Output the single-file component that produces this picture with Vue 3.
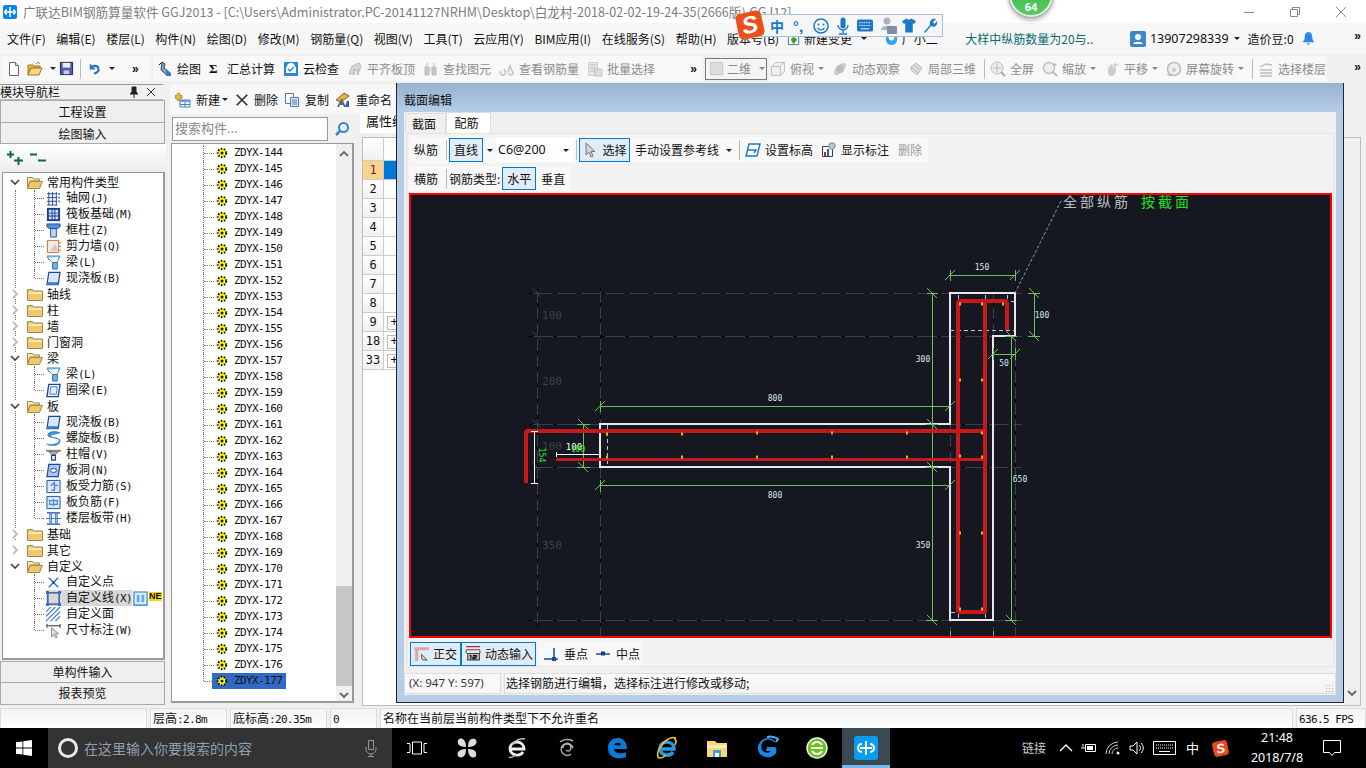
<script setup>
// 图标都写成内联 SVG 片段，viewBox 统一 16x16
const icons = {
  doc: '<path d="M3.5 1.5h6l3 3v10h-9z" fill="#fff" stroke="#667"/><path d="M9.5 1.5v3h3" fill="#dde" stroke="#667"/>',
  open: '<path d="M1 4h5l1 1h6v2H4l-3 7z" fill="#e8b850" stroke="#a07820"/><path d="M4 7h11l-3 7H1z" fill="#f8d880" stroke="#a07820"/><path d="M9 3c1-2 3-2 4 0" fill="none" stroke="#4070c0"/>',
  save: '<path d="M1.5 1.5h13v13h-13z" fill="#4a60b8" stroke="#223"/><path d="M4 2h8v5H4z" fill="#eef"/><path d="M5 10h6v4H5z" fill="#c8c8d8"/>',
  undo: '<path d="M3 3v5h5" fill="none" stroke="#2a6fc0" stroke-width="2"/><path d="M3 8c2-4 8-4 9 0 1 3-2 5-5 6" fill="none" stroke="#2a6fc0" stroke-width="2.4"/>',
  draw: '<path d="M5 1l3 2-1 4 6 5-2 3-7-6z" fill="#7aa8d8" stroke="#345"/><path d="M9 8l5 4v3H9z" fill="#3a78c0"/><path d="M2 4l3-3" stroke="#222"/>',
  cloud: '<path d="M1 1h14v14H1z" fill="#2a88d8"/><path d="M4 6a4 4 0 0 1 8 0h1v6H3V6z" fill="#fff"/><path d="M5 8l2 2 4-4" fill="none" stroke="#2a88d8" stroke-width="1.5"/>',
  align: '<path d="M2 13l3-8 7-3 2 3-3 8z" fill="#d4d4d4" stroke="#bbb"/><path d="M6 8h6v6H6z" fill="#c4c4c4"/><path d="M8 10h2v4H8z" fill="#eee"/>',
  find: '<path d="M2 6h4v8H2zM9 6h4v8H9z" fill="#c8c8c8" stroke="#bbb"/><path d="M3 2h2v4H3zM10 2h2v4h-2zM6 7h3v3H6z" fill="#d8d8d8"/>',
  rebar: '<path d="M2 10a2.5 2.5 0 1 0 4 0l-1-2M9 11l2-6 3 7a2 2 0 0 1-4 0" fill="none" stroke="#c4c4c4" stroke-width="1.6"/>',
  batch: '<path d="M1.5 1.5h9v13h-9z" fill="#e8e8e8" stroke="#ccc"/><path d="M3 4h6M3 7h6M3 10h6" stroke="#bbb"/><path d="M8 8h7v7H8z" fill="#ddd" stroke="#c4c4c4"/>',
  cube: '<path d="M1.5 5.5h9v9h-9zM1.5 5.5l4-4h9l-4 4M10.5 14.5l4-4v-9" fill="#eee" stroke="#c0c0c0"/>',
  orbit: '<ellipse cx="8" cy="8" rx="7" ry="3" transform="rotate(-45 8 8)" fill="#d0d0d0" stroke="#c0c0c0"/><circle cx="8" cy="8" r="4" fill="#bbb"/>',
  part3d: '<path d="M3 6l5-4 6 5-5 7-6-5z" fill="#ddd" stroke="#bbb"/><path d="M6 4l6 5M4 7l6 5" stroke="#bbb"/>',
  full: '<circle cx="7" cy="7" r="6" fill="#eee" stroke="#bbb"/><path d="M7 3v8M3 7h8" stroke="#bbb"/><path d="M11 11l4 4" stroke="#aaa" stroke-width="2"/>',
  zoom: '<circle cx="7" cy="7" r="5.5" fill="#eee" stroke="#c0c0c0" stroke-width="1.5"/><path d="M11 11l4 4" stroke="#bbb" stroke-width="2"/><path d="M13 2v3M11.5 3.5h3" stroke="#bbb"/>',
  pan: '<path d="M4 8c0-3 2-3 2-1V5c0-2 3-2 3 0v2c1-1 3 0 3 2 0 4-2 6-5 6-3 0-3-4-3-7z" fill="#ccc"/><path d="M11 2v5M9 4h5" stroke="#c0c0c0"/>',
  rotate: '<circle cx="8" cy="8" r="6.5" fill="#eee" stroke="#bbb" stroke-width="1.5"/><circle cx="8" cy="9" r="2" fill="#ccc"/><path d="M1 13l4 2" stroke="#aaa"/>',
  floor: '<path d="M2 6l6-3 6 1M2 9h12M2 12h12M2 15h12" fill="none" stroke="#bbb" stroke-width="1.3"/>',
  square: '<path d="M1.5 1.5h13v13h-13z" fill="#ddd" stroke="#c4c4c4"/>',
  level: '<path d="M4 2h11l-3 12H1z" fill="#fff" stroke="#1a78c8" stroke-width="1.4"/><path d="M3 8h8l-2 3" fill="none" stroke="#1a78c8" stroke-width="1.4"/>',
  mark: '<path d="M1.5 4.5h10v10h-10z" fill="#fff" stroke="#345"/><circle cx="11" cy="4" r="3.2" fill="#b8c8e0" stroke="#789"/><path d="M3 10h2v4H3z" fill="#c03020"/><path d="M6 7h2v7H6z" fill="#3060a0"/>',
  arrow: '<path d="M3 1v12l3-3 2 5 2-1-2-4.5h4z" fill="#d4d4d4" stroke="#777"/>',
  ortho: '<path d="M1 2h14v3H1zM2 5h3v10H2z" fill="#d8a8a8"/><path d="M8 9l5 5-3 0-2-2z" fill="#fff" stroke="#666"/>',
  dyn: '<path d="M1.5 1.5h13M1.5 4.5h13" stroke="#a03030"/><path d="M1.5 5v3M14.5 5v3" stroke="#555"/><path d="M3 8h11v6H3z" fill="#bbb" stroke="#444"/><path d="M5 10h1v3M8 10h3v1.500H8V13h3" fill="none" stroke="#000"/>',
  perp: '<path d="M1 13h14" stroke="#1a4aa0" stroke-width="1.5"/><path d="M11 2v12" stroke="#1a4aa0" stroke-width="1.5"/><path d="M9 11h4v4H9z" fill="#1a4aa0"/>',
  mid: '<path d="M1 8h14" stroke="#1a4aa0" stroke-width="1.5"/><path d="M6 5.5h4v4H6z" fill="#123a90"/>',
  grid: '<path d="M1 3h11M1 7h11M1 11h11M1 15h11M3 1v14M7 1v14M11 1v14" stroke="#1a4aa0" fill="none"/><path d="M13 2h2v2h-2zM13 6h2v2h-2zM13 10h2v2h-2z" fill="#4a7ad0"/>',
  raft: '<path d="M1 1h14v14H1z" fill="#1a3a90"/><path d="M3 3h3v3H3zM7 3h2v3H7zM10 3h3v3h-3zM3 7h3v2H3zM7 7h2v2H7zM10 7h3v2h-3zM3 10h3v3H3zM7 10h2v3H7zM10 10h3v3h-3z" fill="#cfe0f8"/>',
  column: '<path d="M1 1h14v3l-3 2H4L1 4z" fill="#5a8ed8" stroke="#1a4aa0"/><path d="M5 6h6v9H5z" fill="#bcd8f8" stroke="#1a4aa0"/>',
  wall: '<path d="M1.5 1.5h12v13h-12z" fill="#f4ece4" stroke="#c86a30"/><path d="M4 13l6-8 3 8z" fill="#bbb" opacity=".7"/><path d="M14 4h2M14 8h2M14 12h2" stroke="#c86a30"/>',
  beam: '<path d="M1 1h14l-2 4H3z" fill="#8ac0f0" stroke="#3a90d0"/><path d="M2 3l5 5h5l2-6" fill="#fff" stroke="#3a90d0"/><path d="M7 8h5v7H7z" fill="#6ab0e8" stroke="#2a70b8"/>',
  slab: '<path d="M3 1.5h12l-2 13H1z" fill="#d8e8fa" stroke="#1a4aa0" stroke-width="1.3"/><path d="M2 12h11v3H1z" fill="#3a78d0"/>',
  ring: '<path d="M3 1.5h12l-2 13H1z" fill="#fff" stroke="#1a4aa0" stroke-width="1.5"/><path d="M5 4h7l-1 8H4z" fill="#e4eefa" stroke="#3a78d0"/>',
  spiral: '<path d="M15 2C9-1 1 1 2 5c1 3 12 1 12 5 0 4-9 5-13 4 3 2 13 3 14-3 1-4-10-3-10-6 0-1 6-2 10-3z" fill="#3a98e0" stroke="#1a68b8" stroke-width=".6"/>',
  cap: '<path d="M0 3h16v2H0z" fill="#888"/><path d="M3 5h10l-3 3H6z" fill="#bbb" stroke="#666"/><path d="M6 9h4v5H6z" fill="#fff" stroke="#1a4aa0" stroke-width="1.3"/>',
  hole: '<path d="M3 1.5h12l-2 13H1z" fill="#a8c8f0" stroke="#1a4aa0" stroke-width="1.3"/><ellipse cx="8" cy="8" rx="3.5" ry="2" fill="#fff" stroke="#1a4aa0"/>',
  main: '<path d="M1 1.5h14v13H1z" fill="#d8e8fa" stroke="#1a4aa0"/><path d="M5 7l4-3v3h4M9 7v5H6" fill="none" stroke="#4a8ad0" stroke-width="1.5"/>',
  neg: '<path d="M1 1.5h14v13H1z" fill="#d8e8fa" stroke="#1a4aa0"/><path d="M8 4v8M3 6h10M3 10h10M4 6v4M12 6v4" fill="none" stroke="#4a8ad0" stroke-width="1.2"/>',
  band: '<path d="M1 2h14M1 14h14" stroke="#1a4aa0" stroke-width="1.5"/><path d="M4 3h2v10H4zM10 3h2v10h-2z" fill="#bcd8f8" stroke="#3a78d0"/><path d="M0 8h16" stroke="#3a78d0"/>',
  point: '<path d="M3 3l10 10M13 3L3 13" stroke="#2a70c8" stroke-width="1.5"/><circle cx="8" cy="8" r="1" fill="#123"/>',
  line: '<path d="M2 2h12v12H2z" fill="none" stroke="#1a4aa0" stroke-width="1.4"/><path d="M0 0h3v3H0zM13 0h3v3h-3zM0 13h3v3H0zM13 13h3v3h-3z" fill="#2a70c8"/>',
  area: '<path d="M0 5l5-5M0 10L10 0M0 15L15 0M5 15L15 5M10 15l5-5" stroke="#3a78d0" stroke-width="1.2"/>',
  dim: '<path d="M1 3h14M1 1v4M15 1v4" stroke="#222"/><path d="M6 5v10l2.500-2.500 2 3.500 1.500-1-2-3.500h3.500z" fill="#ddd" stroke="#888"/>',
  split: '<path d="M1 1h14v14H1z" fill="#dff0ff" stroke="#1a78c8" stroke-width="1.2"/><path d="M4 4h3v8H4zM9 4h3v8H9z" fill="#6aa8e8"/>',
  newAdd: '<path d="M3 2h4v3h3v4H7v3H3V9H0V5h3z" fill="#e8c030" stroke="#a08010" transform="scale(.7)"/><path d="M5 8h10v7H5z" fill="#fff" stroke="#4a7ab8"/><path d="M5 8h10v2H5z" fill="#6a9ad8"/><path d="M10 10v5M5 12.5h10" stroke="#4a7ab8"/>',
  del: '<path d="M2 2l12 12M14 2L2 14" stroke="#333" stroke-width="2"/>',
  copy: '<path d="M1.5 1.5h8v10h-8z" fill="#fff" stroke="#4a7ab8"/><path d="M6.5 5.5h8v9h-8z" fill="#dbe8f8" stroke="#4a7ab8"/><path d="M8 8h5M8 10h5M8 12h5" stroke="#4a7ab8"/>',
  rename: '<path d="M1 8l8-7 5 3-8 6z" fill="#e0b040" stroke="#8a6a20"/><path d="M2 15l4-8 1 0 4 8h-2l-1-2H5l-1 2z" fill="#666"/><path d="M10 15l2-6h2v6z" fill="#2a60b8"/>',
  search: '<circle cx="9.5" cy="6.5" r="4.5" fill="none" stroke="#2a88d8" stroke-width="2"/><path d="M6 10l-4 4" stroke="#2a88d8" stroke-width="2.5"/>',
  change: '<path d="M2.5 1.5h8l3 3v10h-11z" fill="#fff" stroke="#3a70b8"/><path d="M8 6l4 3-4 5-3-5z" fill="#3aa020"/>',
  helper: '<path d="M2 1h12v8a6 6 0 0 1-12 0z" fill="#3aa0e8"/><path d="M5 5v2a3 3 0 0 0 6 0V5" fill="#fff"/>',
  user: '<path d="M0 2a2 2 0 0 1 2-2h12a2 2 0 0 1 2 2v12a2 2 0 0 1-2 2H2a2 2 0 0 1-2-2z" fill="#3a88c8"/><circle cx="8" cy="6" r="3" fill="#fff"/><path d="M3 13c1-3 9-3 10 0z" fill="#fff"/>',
  bell: '<path d="M8 1c-3 0-4 3-4 6 0 3-2 4-2 5h12c0-1-2-2-2-5 0-3-1-6-4-6z" fill="#2a88e8"/><path d="M6 13h4l-2 2z" fill="#2a88e8"/>'
}

const bars = {
  left: [
    { icon: 'draw', label: '绘图' },
    { sigma: true, label: '汇总计算' },
    { icon: 'cloud', label: '云检查' },
    { icon: 'align', label: '平齐板顶', off: true },
    { icon: 'find', label: '查找图元', off: true },
    { icon: 'rebar', label: '查看钢筋量', off: true },
    { icon: 'batch', label: '批量选择', off: true }
  ],
  right: [
    { icon: 'cube', label: '俯视', off: true, caret: true },
    { icon: 'orbit', label: '动态观察', off: true },
    { icon: 'part3d', label: '局部三维', off: true },
    { sep: true },
    { icon: 'full', label: '全屏', off: true },
    { icon: 'zoom', label: '缩放', off: true, caret: true },
    { icon: 'pan', label: '平移', off: true, caret: true },
    { icon: 'rotate', label: '屏幕旋转', off: true, caret: true },
    { sep: true },
    { icon: 'floor', label: '选择楼层', off: true }
  ]
}

const menus = ['文件(F)', '编辑(E)', '楼层(L)', '构件(N)', '绘图(D)', '修改(M)', '钢筋量(Q)', '视图(V)', '工具(T)', '云应用(Y)', 'BIM应用(I)', '在线服务(S)', '帮助(H)', '版本号(B)']

const tree = [
  { label: '常用构件类型', open: true },
  { label: '轴网(J)', icon: 'grid' },
  { label: '筏板基础(M)', icon: 'raft' },
  { label: '框柱(Z)', icon: 'column' },
  { label: '剪力墙(Q)', icon: 'wall' },
  { label: '梁(L)', icon: 'beam' },
  { label: '现浇板(B)', icon: 'slab', last: true },
  { label: '轴线' },
  { label: '柱' },
  { label: '墙' },
  { label: '门窗洞' },
  { label: '梁', open: true },
  { label: '梁(L)', icon: 'beam' },
  { label: '圈梁(E)', icon: 'ring', last: true },
  { label: '板', open: true },
  { label: '现浇板(B)', icon: 'slab' },
  { label: '螺旋板(B)', icon: 'spiral' },
  { label: '柱帽(V)', icon: 'cap' },
  { label: '板洞(N)', icon: 'hole' },
  { label: '板受力筋(S)', icon: 'main' },
  { label: '板负筋(F)', icon: 'neg' },
  { label: '楼层板带(H)', icon: 'band', last: true },
  { label: '基础' },
  { label: '其它' },
  { label: '自定义', open: true },
  { label: '自定义点', icon: 'point' },
  { label: '自定义线(X)', icon: 'line', active: true },
  { label: '自定义面', icon: 'area' },
  { label: '尺寸标注(W)', icon: 'dim', last: true }
]

// 拆开中文和括号里的快捷键，快捷键用等宽字
const splitKey = (s) => {
  const i = s.indexOf('(')
  return i < 0 ? [s, ''] : [s.slice(0, i), s.slice(i)]
}

const components = []
for (let n = 144; n <= 177; n++) components.push('ZDYX-' + n)

const gridRows = ['1', '2', '3', '4', '5', '6', '7', '8', '9', '18', '33']

// 画布上的点和线，坐标直接用页面坐标
const axisH = [
  [529, 1022, 293], [529, 1022, 336], [529, 1022, 424], [529, 1022, 467], [529, 1022, 620]
]
const axisV = [
  [537, 287, 626], [600, 287, 636], [950, 287, 636], [993, 287, 636], [1015, 287, 636]
]
const greyTicks = [[537, 293], [537, 336], [537, 424], [537, 467]]
const ticksH = [[600, 406], [950, 406], [600, 485], [950, 485], [950, 275], [1015, 275], [993, 354], [1015, 354]]
const ticksV = [[1034, 293], [1034, 336], [932, 293], [932, 424], [932, 467], [932, 620], [1011, 336], [1011, 620], [583, 424], [583, 467]]
const yellow = [
  [607, 434], [682, 434], [757, 433], [832, 433], [907, 433], [982, 433],
  [607, 457], [682, 457], [757, 457], [832, 457], [907, 457], [960, 456], [982, 457],
  [960, 304], [982, 304], [1003, 304], [960, 380], [982, 380],
  [960, 533], [982, 533], [960, 609], [982, 609]
]
const dimLabels = [
  ['800', 775, 401], ['800', 775, 498], ['150', 982, 270], ['100', 1042, 318],
  ['300', 923, 362], ['350', 923, 548], ['50', 1004, 366], ['650', 1020, 482]
]
const bgLabels = [['100', 552, 319], ['200', 552, 385], ['100', 552, 450], ['350', 552, 549]]
</script>

<template>
  <div class="app">
    <header class="titlebar">
      <span class="logo">
        <svg viewBox="0 0 16 16" width="16" height="16"><path d="M1 3a2 2 0 0 1 2-2h10a2 2 0 0 1 2 2v10a2 2 0 0 1-2 2H3a2 2 0 0 1-2-2z" fill="#0a84e8"/><path d="M8 3v10M4 8h8M5 6a2 2 0 0 0 0 4M11 6a2 2 0 0 1 0 4" fill="none" stroke="#fff" stroke-width="1.5"/></svg>
      </span>
      <span class="title-text">广联达BIM钢筋算量软件 GGJ2013 - [C:\Users\Administrator.PC-20141127NRHM\Desktop\白龙村-2018-02-02-19-24-35(2666版).GGJ12]</span>
      <span class="win-ctl">
        <svg width="12" height="12" viewBox="0 0 12 12"><path d="M1 6.5h10" stroke="#888"/></svg>
        <svg width="12" height="12" viewBox="0 0 12 12"><path d="M1.5 3.5h7v7h-7zM3.5 3V1.5h7v7H9" fill="none" stroke="#888"/></svg>
        <svg width="12" height="12" viewBox="0 0 12 12"><path d="M1 1l10 10M11 1L1 11" stroke="#888"/></svg>
      </span>
    </header>

    <nav class="menubar">
      <span v-for="m in menus" :key="m">{{ m }}</span>
      <span class="menu-link"><svg viewBox="0 0 16 16" width="15" height="15" v-html="icons.change"></svg>新建变更<i class="caret"></i></span>
      <span class="menu-link"><svg viewBox="0 0 16 16" width="15" height="15" v-html="icons.helper"></svg>广小二</span>
      <span class="notice">大样中纵筋数量为20与..</span>
      <span class="account">
        <svg viewBox="0 0 16 16" width="16" height="16" v-html="icons.user"></svg>
        <span class="phone">13907298339</span><i class="caret"></i>
        <span class="beans">造价豆:0</span>
        <svg viewBox="0 0 16 16" width="15" height="17" v-html="icons.bell"></svg>
      </span>
      <b class="more menu-more">»</b>
    </nav>

    <div class="toolbar">
      <div class="tb-group tb-file">
        <svg viewBox="0 0 16 16" width="16" height="16" v-html="icons.doc"></svg>
        <svg viewBox="0 0 16 16" width="16" height="16" v-html="icons.open"></svg>
        <i class="caret"></i>
        <svg viewBox="0 0 16 16" width="15" height="15" v-html="icons.save"></svg>
        <span class="tb-sep"></span>
        <svg viewBox="0 0 16 16" width="14" height="15" v-html="icons.undo"></svg>
        <i class="caret"></i>
        <b class="more">»</b>
      </div>
      <div class="tb-group tb-left">
        <span v-for="b in bars.left" :key="b.label" class="tb-item" :class="{ off: b.off }">
          <b v-if="b.sigma" class="sigma">Σ</b>
          <svg v-else viewBox="0 0 16 16" width="16" height="16" v-html="icons[b.icon]"></svg>
          {{ b.label }}
        </span>
        <b class="more tb-left-more">»</b>
      </div>
      <div class="combo2d">
        <svg viewBox="0 0 16 16" width="15" height="15" v-html="icons.square"></svg>
        <span>二维</span><i class="caret grey"></i>
      </div>
      <div class="tb-group tb-right">
        <template v-for="(b, i) in bars.right" :key="i">
          <span v-if="b.sep" class="tb-sep"></span>
          <span v-else class="tb-item off">
            <svg viewBox="0 0 16 16" width="16" height="16" v-html="icons[b.icon]"></svg>
            {{ b.label }}<i v-if="b.caret" class="caret grey"></i>
          </span>
        </template>
      </div>
      <b class="more tb-end">»</b>
    </div>

    <main class="workspace">
      <aside class="nav">
        <div class="nav-head">
          <span>模块导航栏</span>
          <svg width="10" height="12" viewBox="0 0 10 12"><path d="M3 1h4v5l2 2H1l2-2zM5 8v4" fill="#222" stroke="#222"/></svg>
          <svg width="10" height="10" viewBox="0 0 10 10"><path d="M1 1l8 8M9 1L1 9" stroke="#333"/></svg>
        </div>
        <div class="nav-btn">工程设置</div>
        <div class="nav-btn">绘图输入</div>
        <div class="tree-tools">
          <svg width="16" height="16" viewBox="0 0 16 16"><path d="M0 4.5h7M3.500 1v7M7 10.500h9M11.500 7v8" stroke="#0a6a50" stroke-width="2"/></svg>
          <svg width="16" height="16" viewBox="0 0 16 16"><path d="M0 4.5h7M8 10.500h8" stroke="#0a6a50" stroke-width="2"/></svg>
        </div>
        <div class="tree">
          <span class="trunk"></span>
          <div v-for="(n, i) in tree" :key="i" class="tree-row" :class="{ child: n.icon, last: n.last }">
            <template v-if="n.icon">
              <span class="child-body" :class="{ active: n.active }">
                <svg viewBox="0 0 16 16" width="15" height="15" v-html="icons[n.icon]"></svg>
                <span class="label">{{ splitKey(n.label)[0] }}<span class="mono">{{ splitKey(n.label)[1] }}</span></span>
              </span>
              <template v-if="n.active">
                <svg class="split" viewBox="0 0 16 16" width="15" height="15" v-html="icons.split"></svg>
                <span class="new-tag">NE</span>
              </template>
            </template>
            <template v-else>
              <svg class="chev" width="10" height="10" viewBox="0 0 10 10">
                <path v-if="n.open" d="M1 3l4 4 4-4" fill="none" stroke="#444" stroke-width="1.6"/>
                <path v-else d="M3 1l4 4-4 4" fill="none" stroke="#bbb" stroke-width="1.8"/>
              </svg>
              <svg class="folder" width="16" height="13" viewBox="0 0 16 13">
                <template v-if="n.open">
                  <path d="M0.5 1.5h5l1 1.500h6v2H3l-2.500 7z" fill="#f8e8b0" stroke="#a08850"/>
                  <path d="M3 5.5h12.500l-3 7H0.500z" fill="#f0c868" stroke="#a08850"/>
                </template>
                <template v-else>
                  <path d="M0.5 1.5h5l1 1.500h9v9.500H0.500z" fill="#f0c868" stroke="#a08850"/>
                  <path d="M1.5 4h13v2h-13z" fill="#fcecc0"/>
                </template>
              </svg>
              <span class="label">{{ n.label }}</span>
            </template>
          </div>
        </div>
        <div class="nav-btn low">单构件输入</div>
        <div class="nav-btn">报表预览</div>
      </aside>

      <section class="parts">
        <div class="parts-bar">
          <span class="tool"><svg viewBox="0 0 16 16" width="16" height="16" v-html="icons.newAdd"></svg>新建<i class="caret"></i></span>
          <span class="tool"><svg viewBox="0 0 16 16" width="14" height="14" v-html="icons.del"></svg>删除</span>
          <span class="tool"><svg viewBox="0 0 16 16" width="16" height="16" v-html="icons.copy"></svg>复制</span>
          <span class="tool"><svg viewBox="0 0 16 16" width="16" height="16" v-html="icons.rename"></svg>重命名</span>
        </div>
        <div class="search">
          <span class="search-input">搜索构件...</span>
          <svg viewBox="0 0 16 16" width="16" height="16" v-html="icons.search"></svg>
        </div>
        <div class="parts-list">
          <div class="rows">
            <div v-for="c in components" :key="c" class="part-row" :class="{ sel: c === 'ZDYX-177' }">
              <span class="part-name">
                <svg width="12" height="12" viewBox="0 0 12 12"><circle cx="6" cy="6" r="4.2" fill="#ff0" stroke="#111" stroke-width="2" stroke-dasharray="1.6 1.4"/><circle cx="6" cy="6" r="1.5" fill="#111"/></svg>
                <span class="mono name">{{ c }}</span>
              </span>
            </div>
          </div>
          <div class="vscroll">
            <svg class="up" width="10" height="7" viewBox="0 0 10 7"><path d="M1 6l4-4 4 4" fill="none" stroke="#666" stroke-width="1.8"/></svg>
            <span class="thumb"></span>
            <svg width="10" height="7" viewBox="0 0 10 7"><path d="M1 1l4 4 4-4" fill="none" stroke="#666" stroke-width="1.8"/></svg>
          </div>
        </div>
      </section>

      <section class="props">
        <div class="props-tab">属性编辑</div>
        <div class="props-box">
          <div class="props-grid">
            <div class="grid-row head"><span class="no"></span><span class="val"></span></div>
            <div v-for="r in gridRows" :key="r" class="grid-row" :class="{ current: r === '1' }">
              <span class="no">{{ r }}</span>
              <span class="val"><i v-if="Number(r) >= 9" class="plus">+</i></span>
            </div>
          </div>
          <div class="vscroll right">
            <svg width="10" height="7" viewBox="0 0 10 7"><path d="M1 1l4 4 4-4" fill="none" stroke="#666" stroke-width="1.8"/></svg>
          </div>
        </div>
      </section>

      <!-- 浮在主界面上的截面编辑窗口 -->
      <div class="dialog">
        <div class="dlg-title">截面编辑</div>
        <div class="dlg-body">
          <div class="tabs">
            <span class="tab">截面</span>
            <span class="tab on">配筋</span>
          </div>
          <div class="panel">
            <div class="rebar-bar row1">
              <span>纵筋</span><span class="tb-sep"></span>
              <span class="btn on line-btn">直线</span><i class="caret"></i>
              <span class="combo"><span>C6@200</span><i class="caret"></i></span>
              <span class="tb-sep"></span>
              <span class="btn on pick"><svg viewBox="0 0 16 16" width="16" height="16" v-html="icons.arrow"></svg>选择</span>
              <span class="ref">手动设置参考线<i class="caret"></i></span>
              <span class="tb-sep"></span>
              <span class="ic"><svg viewBox="0 0 16 16" width="16" height="16" v-html="icons.level"></svg>设置标高</span>
              <span class="ic"><svg viewBox="0 0 16 16" width="16" height="16" v-html="icons.mark"></svg>显示标注</span>
              <span class="ic grey">删除</span>
            </div>
            <div class="rebar-bar row2">
              <span>横筋</span><span class="tb-sep"></span>
              <span class="type">钢筋类型:</span>
              <span class="btn on">水平</span>
              <span class="vert">垂直</span>
            </div>
            <div class="canvas">
              <svg width="919" height="441" viewBox="411 195 919 441">
                <g shape-rendering="crispEdges">
                  <g v-for="(l, i) in axisH" :key="'h' + i">
                    <line :x1="l[0]" :x2="l[1]" :y1="l[2] + 0.5" :y2="l[2] + 0.5" stroke="#3a3f4a"/>
                    <line :x1="l[0]" :x2="l[1]" :y1="l[2] + 0.5" :y2="l[2] + 0.5" stroke="#000" stroke-dasharray="4 20"/>
                  </g>
                  <g v-for="(l, i) in axisV" :key="'v' + i">
                    <line :x1="l[0] + 0.5" :x2="l[0] + 0.5" :y1="l[1]" :y2="l[2]" stroke="#3a3f4a"/>
                    <line :x1="l[0] + 0.5" :x2="l[0] + 0.5" :y1="l[1]" :y2="l[2]" stroke="#000" stroke-dasharray="4 12"/>
                  </g>
                </g>
                <line v-for="(t, i) in greyTicks" :key="'g' + i" :x1="t[0] - 5" :y1="t[1] - 5" :x2="t[0] + 4" :y2="t[1] + 4" stroke="#3a3f4a"/>
                <text v-for="(t, i) in bgLabels" :key="'b' + i" class="bg-num" :x="t[1]" :y="t[2]" text-anchor="middle">{{ t[0] }}</text>

                <!-- 截面外框 -->
                <path d="M600 424H950V293H1015V336H993V620H950V467H600Z" fill="none" stroke="#e8e8e8" stroke-width="2"/>

                <!-- 标注线 -->
                <g stroke="#6fbf5f" fill="none" shape-rendering="crispEdges">
                  <path d="M600.5 406.5H950M600.5 485.5H950M950.5 275.5H1015M993.5 354.5H1015M1034.5 293V336M932.5 293V620M1011.5 336V620M583.5 424V467"/>
                  <path d="M600.5 401V412M600.5 480V492M950.5 270V281M1015.5 270V281M993.5 348V360M1015.5 348V360M950.5 631V636M993.5 631V636"/>
                  <path d="M927 293.5H938M1028 293.5H1040M1028 336.5H1040M926 424.5H938M926 467.5H938M926 620.5H938M1005 336.5H1017M1005 620.5H1017M577 424.5H590M577 467.5H590"/>
                </g>
                <g stroke="#6fbf5f">
                  <line v-for="(t, i) in ticksH" :key="'th' + i" :x1="t[0] - 5" :y1="t[1] + 5" :x2="t[0] + 5" :y2="t[1] - 5"/>
                  <line v-for="(t, i) in ticksV" :key="'tv' + i" :x1="t[0] - 5" :y1="t[1] - 5" :x2="t[0] + 5" :y2="t[1] + 5"/>
                </g>

                <!-- 内侧蓝色虚线 -->
                <g stroke="#a8c8f0" stroke-dasharray="4 3" shape-rendering="crispEdges">
                  <line x1="950" x2="1015" y1="330.5" y2="330.5"/>
                  <line x1="1004" x2="1014" y1="301.5" y2="301.5"/>
                  <line x1="607.5" x2="607.5" y1="425" y2="467"/>
                  <line x1="958.5" x2="958.5" y1="295" y2="300"/>
                  <line x1="985.5" x2="985.5" y1="295" y2="300"/>
                  <line x1="1007.5" x2="1007.5" y1="295" y2="300"/>
                  <line x1="951" x2="956" y1="612.5" y2="612.5"/>
                  <line x1="958.5" x2="958.5" y1="614" y2="619"/>
                  <line x1="985.5" x2="985.5" y1="614" y2="619"/>
                </g>

                <!-- 钢筋 -->
                <g fill="none" stroke="#c8181c" stroke-linejoin="round">
                  <path d="M526 483V433Q526 431 528 431H985" stroke-width="4"/>
                  <path d="M556 459.5H985" stroke-width="3"/>
                  <path d="M958 612V304Q958 301 961 301H1004Q1007 301 1007 304V330" stroke-width="4"/>
                  <path d="M985 301V612H958" stroke-width="4"/>
                </g>
                <rect v-for="(d, i) in yellow" :key="'y' + i" :x="d[0] - 1" :y="d[1] - 1.5" width="2" height="3" fill="#f0b000"/>

                <!-- 左端白色标注 -->
                <g stroke="#fff" fill="none" shape-rendering="crispEdges">
                  <path d="M534.5 431V484M531 431.5H538M531 483.5H538M556 454.5H600M556.5 452V457"/>
                </g>
                <text class="num big-num" x="574" y="450" text-anchor="middle">100</text>
                <text class="num green-num" x="578" y="452" text-anchor="middle">100</text>
                <text class="num green-num" transform="translate(539 455) rotate(90)" text-anchor="middle">154</text>

                <text v-for="(t, i) in dimLabels" :key="'d' + i" class="num" :x="t[1]" :y="t[2]" text-anchor="middle">{{ t[0] }}</text>

                <line x1="1015" y1="293" x2="1062" y2="199" stroke="#999" stroke-dasharray="3 2"/>
                <text class="leader" x="1063" y="207">全部纵筋</text>
                <text class="leader green" x="1141" y="207">按截面</text>
              </svg>
            </div>
            <div class="snap-bar">
              <span class="btn on snap"><svg viewBox="0 0 16 16" width="17" height="17" v-html="icons.ortho"></svg>正交</span>
              <span class="btn on snap"><svg viewBox="0 0 16 16" width="18" height="17" v-html="icons.dyn"></svg>动态输入</span>
              <span class="snap-group">
                <span class="ic"><svg viewBox="0 0 16 16" width="16" height="16" v-html="icons.perp"></svg>垂点</span>
                <span class="ic"><svg viewBox="0 0 16 16" width="16" height="16" v-html="icons.mid"></svg>中点</span>
              </span>
            </div>
          </div>
          <div class="dlg-status">
            <span class="coord">(X: 947 Y: 597)</span>
            <span class="hint">选择钢筋进行编辑，选择标注进行修改或移动;<i class="grip"></i></span>
          </div>
        </div>
      </div>
    </main>

    <footer class="statusbar">
      <span class="cell c0"></span>
      <span class="cell c1">层高<span class="mono">:2.8m</span></span>
      <span class="cell c2">底标高<span class="mono">:20.35m</span></span>
      <span class="cell c3"><span class="mono">0</span></span>
      <span class="cell c4">名称在当前层当前构件类型下不允许重名</span>
      <span class="cell c5"><span class="mono">636.5 FPS</span></span>
    </footer>

    <div class="taskbar">
      <span class="start">
        <svg width="16" height="16" viewBox="0 0 16 16"><path d="M0 2.3l6.5-.9v6.200H0zM7.3 1.300L16 0v7.600H7.300zM0 8.400h6.500v6.200L0 13.700zM7.300 8.400H16V16l-8.700-1.200z" fill="#fff"/></svg>
      </span>
      <span class="task-search">
        <svg width="22" height="22" viewBox="0 0 22 22"><circle cx="11" cy="11" r="8.5" fill="none" stroke="#e8e8e8" stroke-width="3"/></svg>
        <span class="task-hint">在这里输入你要搜索的内容</span>
        <svg class="mic" width="12" height="18" viewBox="0 0 12 18"><path d="M3.5 1.5h5v9h-5zM1 8v2a5 5 0 0 0 10 0V8M6 15v2M3 17.500h6" fill="none" stroke="#999"/></svg>
      </span>
      <span class="task-icons">
        <span class="task-ic"><svg width="20" height="14" viewBox="0 0 20 14"><path d="M5.5 1h9v12h-9zM0 2.500h3v9H0M20 2.500h-3v9h3" fill="none" stroke="#fff"/></svg></span>
        <span class="task-ic"><svg width="22" height="22" viewBox="0 0 22 22"><g fill="#ddd"><path d="M10 10C3 10 1 7 2 3c2-3 8-2 8 7z"/><path d="M12 10c0-7 3-9 7-8 3 2 2 8-7 8z"/><path d="M12 12c7 0 9 3 8 7-2 3-8 2-8-7z"/><path d="M10 12c0 7-3 9-7 8-3-2-2-8 7-8z"/></g></svg></span>
        <span class="task-ic"><svg width="22" height="22" viewBox="0 0 22 22"><path d="M4 12h14c0-9-13-9-14-1 0 8 10 9 13 4" fill="none" stroke="#eee" stroke-width="2.8"/><path d="M19 2c-4-1-10 1-13 6M3 20c1 1 4 0 7-2" fill="none" stroke="#bbb" stroke-width="1.5"/></svg></span>
        <span class="task-ic"><svg width="20" height="20" viewBox="0 0 20 20"><path d="M16 10a6 6 0 1 0-2 6M6 10a4 4 0 0 1 8 0c0 3-3 4-5 2M3 4c3-3 9-3 13-1" fill="none" stroke="#aaa" stroke-width="1.5"/></svg></span>
        <span class="task-ic"><svg width="22" height="22" viewBox="0 0 22 22"><path d="M2 11C2 4 7 1 12 1c5 0 9 4 9 11H8c0 4 6 6 12 3v5c-8 3-18 1-18-9zm6-3c0 0 7 1 7 0 0-3-6-3-7 0z" fill="#0a7ad8"/></svg></span>
        <span class="task-ic"><svg width="24" height="24" viewBox="0 0 24 24"><path d="M5 13h14c0-9-13-9-14-1 0 8 10 9 13 4" fill="none" stroke="#2a98e0" stroke-width="3.5"/><path d="M21 2c-5-2-13 3-17 11-2 5-2 9 1 9 2 0 4-1 6-3M19 3c2 0 3 2 1 6" fill="none" stroke="#e8c030" stroke-width="1.6"/></svg></span>
        <span class="task-ic"><svg width="22" height="20" viewBox="0 0 22 20"><path d="M1 3h8l2 2h10v14H1z" fill="#f8d870"/><path d="M1 7h20v3H1z" fill="#fcecb0"/><path d="M7 12h8v7H7z" fill="#3aa0e0"/><path d="M9 15h4v4H9z" fill="#fff"/></svg></span>
        <span class="task-ic"><svg width="26" height="26" viewBox="0 0 26 26"><path d="M22 8C19 3 14 2 10 4 4 7 2 14 6 19c5 5 13 4 16-1 1-3 0-5-1-6h-8l-1 4h5c-2 3-7 2-9-1-2-4 0-9 4-10 3-1 6 0 8 2z" fill="#1a88e8"/><path d="M13 2c4-1 8 0 11 2l-2 3" fill="none" stroke="#4ab0f8" stroke-width="2"/></svg></span>
        <span class="task-ic"><svg width="24" height="24" viewBox="0 0 24 24"><circle cx="12" cy="12" r="10" fill="#6ac020" stroke="#e8f8d0" stroke-width="1.5"/><path d="M6 12h12M7 9c2-4 8-4 10 0M7 15c2 4 8 4 10 0" fill="none" stroke="#fff" stroke-width="2"/></svg></span>
        <span class="task-ic active"><svg width="24" height="24" viewBox="0 0 24 24"><rect width="24" height="24" rx="3" fill="#0a9cf0"/><path d="M12 5v14M6 12h12M8 8a4 4 0 0 0 0 8M16 8a4 4 0 0 1 0 8" fill="none" stroke="#fff" stroke-width="2"/></svg></span>
      </span>
      <span class="tray">
        <span class="tray-text">链接</span>
        <svg width="14" height="8" viewBox="0 0 14 8"><path d="M1 7l6-6 6 6" fill="none" stroke="#fff" stroke-width="1.3"/></svg>
        <svg width="16" height="12" viewBox="0 0 16 12"><path d="M4.5 2.5h10v7h-10z" fill="none" stroke="#fff"/><path d="M6 4h6v4H6z" fill="#fff"/><path d="M0 6h4M2 2v3" stroke="#fff"/></svg>
        <svg width="16" height="14" viewBox="0 0 16 14"><path d="M1 13A12 12 0 0 1 13 1M4 13a9 9 0 0 1 9-9M7 13a6 6 0 0 1 6-6" fill="none" stroke="#ccc"/><circle cx="13" cy="12" r="1.5" fill="#fff"/></svg>
        <svg width="16" height="14" viewBox="0 0 16 14"><path d="M1 5h3l4-4v12l-4-4H1zM10 4c2 2 2 4 0 6M12 2c3 3 3 7 0 10" fill="none" stroke="#fff"/></svg>
        <svg width="23" height="14" viewBox="0 0 23 14"><path d="M.5.500h22v13H.5z" fill="none" stroke="#fff"/><path d="M3 4h17M3 7h17" stroke="#fff" stroke-dasharray="1 1"/><path d="M6 10.500h11" stroke="#fff"/></svg>
        <span class="tray-cn">中</span>
        <span class="sg-mini">S</span>
        <span class="clock"><span>21:48</span><span>2018/7/8</span></span>
        <svg class="bubble" width="18" height="18" viewBox="0 0 18 18"><path d="M.5 1.500h17v12h-6l-2.500 3-2.500-3h-6z" fill="none" stroke="#fff"/></svg>
      </span>
    </div>

    <!-- 输入法工具条和悬浮球，盖在窗口上面 -->
    <div class="orb">64</div>
    <div class="ime">
      <span class="ime-s">S</span>
      <span class="ime-bar">
        <b>中</b>
        <b class="punc">°,</b>
        <svg class="ime-smile" width="16" height="16" viewBox="0 0 16 16"><circle cx="8" cy="8" r="7" fill="none" stroke="#1a78c8" stroke-width="1.5"/><circle cx="5.5" cy="6.5" r="1" fill="#1a78c8"/><circle cx="10.5" cy="6.5" r="1" fill="#1a78c8"/><path d="M4.5 10c2 2.500 5 2.500 7 0" fill="none" stroke="#1a78c8" stroke-width="1.3"/></svg>
        <svg width="12" height="18" viewBox="0 0 12 18"><path d="M3.5 3a2.500 2.500 0 0 1 5 0v6a2.500 2.500 0 0 1-5 0z" fill="#1a78c8"/><path d="M1 8a5 5 0 0 0 10 0M6 13v3M2 17h8" fill="none" stroke="#1a78c8" stroke-width="1.3"/></svg>
        <svg width="16" height="13" viewBox="0 0 17 13"><rect width="17" height="13" rx="2" fill="#1a78c8"/><path d="M2 3.500h13M2 6.500h13" stroke="#fff" stroke-dasharray="1.500 1"/><path d="M4 10h9" stroke="#fff"/></svg>
        <svg width="16" height="17" viewBox="0 0 16 17"><circle cx="6" cy="4" r="3.5" fill="#aab4c0"/><path d="M0 13c0-5 9-5 10-3v3z" fill="#aab4c0"/><rect x="6" y="9" width="10" height="8" rx="1" fill="#8090a0"/></svg>
        <svg class="ime-shirt" width="14" height="15" viewBox="0 0 15 15"><path d="M0 3l5-3 2.500 1.500L10 0l5 3-2 3-1.500-1v10h-8V5L2 6z" fill="#1a78c8"/></svg>
        <svg class="ime-tool" width="15" height="15" viewBox="0 0 15 15"><path d="M1 14l6-7c-1-4 2-7 6-6l-3 3 1.500 2L14 3c1 4-2 7-6 5l-6 7z" fill="#1a78c8"/></svg>
      </span>
    </div>
  </div>
</template>

<style>
html, body { margin: 0; height: 100%; overflow: hidden; }
</style>

<style scoped>
.app {
  position: relative;
  width: 1366px;
  height: 768px;
  overflow: hidden;
  display: flex;
  flex-direction: column;
  background: #f0f0f0;
  color: #111;
  font: 12px/16px "Noto Sans CJK SC", "Liberation Sans", sans-serif;
}
svg { display: block; flex: none; }
i { font-style: normal; }
.mono {
  font-family: "DejaVu Sans Mono", "Liberation Mono", monospace;
  font-size: 11px;
  letter-spacing: -0.6px;
}
.caret {
  display: inline-block;
  flex: none;
  width: 0;
  height: 0;
  border-left: 3px solid transparent;
  border-right: 3px solid transparent;
  border-top: 3px solid #222;
  vertical-align: middle;
}
.caret.grey { border-top-color: #888; }
.more { font: bold 12px/12px "Liberation Sans", sans-serif; }

/* 标题栏 */
.titlebar {
  height: 23px;
  flex: none;
  display: flex;
  align-items: center;
  background: #fff;
  color: #7c7c7c;
}
.logo { margin-left: 2px; width: 20px; }
.title-text { margin-left: 1px; font-size: 12.6px; white-space: nowrap; }
.win-ctl {
  margin-left: auto;
  display: flex;
  gap: 34px;
  padding-right: 19px;
}

/* 菜单 */
.menubar {
  height: 31px;
  flex: none;
  display: flex;
  align-items: center;
  gap: 10.6px;
  padding-left: 7px;
  background: #f6f6f6;
  white-space: nowrap;
}
.menu-link { display: flex; align-items: center; gap: 3px; margin-left: -3.6px; }
.menu-link + .menu-link { margin-left: 6px; }
.menu-link .caret { margin-left: 6px; }
.notice { margin-left: 17px; color: #0a6a70; width: 128px; flex: none; }
.account {
  margin-left: 26px;
  display: flex;
  align-items: center;
  gap: 4px;
}
.phone { font-family: "Noto Sans", "Liberation Sans", sans-serif; font-size: 12.5px; }
.account .caret { margin: 0 1px; }
.beans { margin: 0 3px 0 3px; width: 46px; flex: none; }
.menu-more { position: absolute; right: 5px; top: 30px; }

/* 工具栏 */
.toolbar {
  height: 29px;
  flex: none;
  display: flex;
  align-items: center;
  white-space: nowrap;
  background: #f0f0f0;
  position: relative;
}
.tb-group { display: flex; align-items: center; height: 25px; background: #f8f8f8; }
.tb-file { width: 148px; flex: none; margin-left: 2px; padding-left: 4px; box-sizing: border-box; gap: 5px; }
.tb-file .caret { margin: 0 -2px 0 2px; }
.tb-file .tb-sep { margin: 0 2px 0 1px; }
.tb-file .more { margin-left: 14px; }
.tb-left { width: 549px; flex: none; margin-left: 3px; padding-left: 4px; box-sizing: border-box; gap: 8px; }
.tb-left-more { margin-left: auto; margin-right: 5px; }
.tb-sep { flex: none; width: 1px; height: 20px; background: #bbb; }
.tb-item { display: flex; align-items: center; gap: 4px; }
.tb-item .caret { margin-left: 0; }
.tb-item.off { color: #8c8c8c; }
.sigma { width: 10px; margin-right: 4px; font: bold 13px/16px "Liberation Serif", serif; color: #111; }
.combo2d {
  width: 62px;
  height: 22px;
  flex: none;
  margin-left: 3px;
  box-sizing: border-box;
  border: 1px solid #777;
  background: #f4f4f4;
  color: #888;
  display: flex;
  align-items: center;
  gap: 3px;
  padding-left: 3px;
}
.combo2d .caret { margin-left: 5px; }
.tb-right { margin-left: 3px; gap: 8px; }
.tb-right .tb-sep { margin-right: -3px; }
.tb-end { position: absolute; right: 5px; top: 7px; }

/* 主区域 */
.workspace {
  position: relative;
  flex: none;
  height: 624px;
  display: flex;
  background: #f0f0f0;
}

/* 左侧导航 */
.nav { width: 166px; flex: none; display: flex; flex-direction: column; padding-top: 1px; box-sizing: border-box; }
.nav-head {
  height: 16px;
  box-sizing: border-box;
  flex: none;
  display: flex;
  align-items: center;
  border-top: 1px solid #999;
  border-bottom: 1px solid #bbb;
  margin-right: 3px;
  font-size: 12px;
}
.nav-head span { flex: 1; }
.nav-head svg { margin-right: 7px; }
.nav-btn {
  height: 22px;
  flex: none;
  box-sizing: border-box;
  margin-right: 1px;
  border: 1px solid #aaa;
  border-bottom: none;
  background: #efefef;
  text-align: center;
  font-size: 12px;
  line-height: 20px;
}
.nav-head + .nav-btn, .nav-head + .nav-btn + .nav-btn { line-height: 22px; }
.nav-btn + .nav-btn { border-bottom: 1px solid #aaa; }
.nav-btn.low { margin-top: 1px; border-bottom: 1px solid #aaa; height: 22px; }
.nav-btn.low + .nav-btn { border-top: none; }
.tree-tools {
  height: 28px;
  flex: none;
  display: flex;
  align-items: center;
  gap: 7px;
  padding-left: 7px;
  background: linear-gradient(#fff, #ececec);
}
.tree {
  position: relative;
  height: 488px;
  flex: none;
  box-sizing: border-box;
  margin: 0 1px 0 2px;
  border: 1px solid #999;
  border-right-width: 2px;
  border-bottom-width: 2px;
  background: #fff;
  padding-top: 1px;
}
.trunk {
  position: absolute;
  left: 12px;
  top: 17px;
  height: 350px;
  border-left: 1px dotted #777;
}
.tree-row {
  position: relative;
  height: 16px;
  display: flex;
  align-items: center;
  white-space: nowrap;
  font-size: 12px;
}
.chev { position: relative; margin-left: 7px; background: #fff; }
.folder { margin-left: 7px; }
.tree-row > .label { margin-left: 4px; }
.tree-row.child::before {
  content: "";
  position: absolute;
  left: 31px;
  top: 0;
  height: 100%;
  border-left: 1px dotted #777;
}
.tree-row.child.last::before { height: 8px; }
.tree-row.child::after {
  content: "";
  position: absolute;
  left: 32px;
  top: 8px;
  width: 9px;
  border-top: 1px dotted #777;
}
.child-body { margin-left: 43px; display: flex; align-items: center; gap: 5px; height: 16px; }
.child-body.active { background: #d8d8d8; }
.new-tag {
  background: #f8d800;
  font: bold 9px/9px "Liberation Sans", sans-serif;
  margin-top: -4px;
  margin-left: 1px;
}
.split { margin-left: 1px; }

/* 构件列表 */
.parts { width: 190px; flex: none; margin-left: 4px; display: flex; flex-direction: column; position: relative; }
.parts-bar {
  height: 29px;
  width: 226px;
  box-sizing: border-box;
  margin-top: 2px;
  display: flex;
  flex: none;
  align-items: center;
  gap: 6px;
  padding-left: 5px;
  background: #f8f8f8;
  white-space: nowrap;
  position: relative;
  z-index: 1;
}
.tool { display: flex; align-items: center; gap: 5px; }
.tool .caret { margin-left: -3px; margin-right: 1px; }
.search { display: flex; align-items: center; height: 24px; margin-top: 3px; padding-left: 2px; gap: 6px; flex: none; }
.search-input {
  width: 156px;
  height: 24px;
  box-sizing: border-box;
  border: 1px solid #999;
  background: #fff;
  color: #888;
  padding-left: 2px;
  line-height: 20px;
  font-size: 13px;
}
.parts-list {
  flex: none;
  height: 560px;
  width: 183px;
  margin: 2px 0 0 1px;
  box-sizing: border-box;
  display: flex;
  border: 1px solid #999;
  border-right-width: 2px;
  border-bottom-width: 2px;
  background: #fff;
}
.rows { width: 164px; flex: none; overflow: hidden; padding-top: 1px; }
.part-row {
  position: relative;
  height: 16px;
  padding-left: 40px;
}
.part-row::before {
  content: "";
  position: absolute;
  left: 31px;
  top: 0;
  height: 100%;
  border-left: 1px dotted #777;
}
.part-row::after {
  content: "";
  position: absolute;
  left: 32px;
  top: 8px;
  width: 10px;
  border-top: 1px dotted #777;
}
.part-row.sel::before { height: 8px; }
.part-name { display: inline-flex; align-items: center; gap: 6px; height: 16px; padding: 0 4px; }
.part-row.sel .part-name { background: #316ac5; }
.name { line-height: 16px; }
.vscroll {
  width: 16px;
  flex: none;
  background: #f0f0f0;
  display: flex;
  flex-direction: column;
  align-items: center;
  padding: 6px 0 2px;
  box-sizing: border-box;
}
.vscroll .up { margin-bottom: auto; }
.thumb { width: 16px; height: 100px; background: #c8c8c8; margin-bottom: 6px; }

/* 属性区，大半被对话框盖住 */
.props { flex: 1; min-width: 0; margin-left: 0; display: flex; flex-direction: column; padding-right: 5px; }
.props-tab { height: 20px; width: 36px; overflow: hidden; margin-top: 30px; flex: none; white-space: nowrap; padding-left: 6px; box-sizing: border-box; background: #fff; font-size: 13px; }
.props-box {
  flex: none;
  height: 569px;
  margin-top: 4px;
  margin-left: 2px;
  box-sizing: border-box;
  border: 1px solid #bbb;
  background: #fff;
  display: flex;
}
.props-grid { flex: 1; }
.grid-row { display: flex; height: 19px; border-bottom: 1px solid #ccc; box-sizing: border-box; }
.grid-row.head { height: 23px; }
.no {
  width: 21px;
  box-sizing: border-box;
  border-right: 1px solid #ccc;
  background: linear-gradient(#fff, #f0f0f0);
  text-align: center;
  font: 12px/18px "DejaVu Sans Mono", monospace;
}
.grid-row.current .no { background: #fdd28a; color: #602060; }
.val { flex: 1; padding-left: 3px; }
.grid-row.current .val { background: #0078d7; }
.plus {
  display: block;
  width: 12px;
  height: 12px;
  margin-top: 3px;
  border: 1px solid #bbb;
  text-align: center;
  font: 12px/11px "DejaVu Sans Mono", monospace;
}
.vscroll.right { justify-content: flex-end; padding-bottom: 8px; }

/* 截面编辑对话框 */
.dialog {
  position: absolute;
  left: 396px;
  top: 0;
  width: 948px;
  height: 620px;
  box-sizing: border-box;
  border: 1px solid #223;
  border-top: none;
  background: #b5cde6;
  padding: 0 7px 7px 7px;
  z-index: 2;
}
.dlg-title {
  height: 29px;
  box-sizing: border-box;
  margin: 0 -7px;
  padding: 9px 7px 0;
  background: linear-gradient(#97b2cf, #b5cde6);
}
.dlg-body { height: 583px; background: #f0f0f0; display: flex; flex-direction: column; }
.tabs { height: 21px; flex: none; display: flex; padding-left: 1px; align-items: flex-end; }
.tab {
  width: 41px;
  height: 20px;
  box-sizing: border-box;
  border: 1px solid #ddd;
  border-bottom: none;
  text-align: center;
  line-height: 19px;
  padding-right: 3px;
  font-size: 12px;
}
.tab.on { width: 45px; height: 21px; background: #fff; line-height: 19px; padding-right: 4px; }
.panel {
  height: 534px;
  flex: none;
  margin: 0 2px 0 3px;
  box-sizing: border-box;
  border: 1px solid #e4e4e4;
  padding: 3px 1px 0;
  background: #f2f2f2;
}
.rebar-bar {
  display: flex;
  align-items: center;
  background: #f8f8f8;
  padding-left: 5px;
  white-space: nowrap;
  width: fit-content;
}
.rebar-bar > * { flex: none; }
.row1 { height: 26px; box-sizing: border-box; padding-right: 6px; }
.row2 { height: 25px; margin-top: 3px; box-sizing: border-box; padding-right: 6px; }
.rebar-bar > .tb-sep { margin: 0 2px 0 8px; }
.btn {
  box-sizing: border-box;
  height: 24px;
  display: inline-flex;
  align-items: center;
  justify-content: center;
  border: 1px solid transparent;
}
.btn.on { border-color: #0078d7; background: #e0ecf6; }
.line-btn { width: 34px; }
.line-btn + .caret { margin: 0 1px 0 4px; }
.combo { width: 77px; height: 24px; margin: 0 0 0 2px; background: #fff; display: flex; align-items: center; justify-content: space-between; padding: 0 4px 0 2px; box-sizing: border-box; font-size: 12.5px; font-family: "Noto Sans", sans-serif; }
.rebar-bar > .combo + .tb-sep { margin-left: 3px; }
.pick { width: 51px; gap: 4px; }
.ref { margin-left: 5px; display: flex; align-items: center; gap: 7px; }
.rebar-bar > .ref + .tb-sep { margin-left: 7px; margin-right: 5px; }
.ic { display: flex; align-items: center; gap: 4px; margin-right: 8px; white-space: nowrap; }
.ic.grey { color: #999; margin: 0 0 0 1px; }
.type { margin-right: 2px; }
.row2 .btn { width: 34px; height: 23px; }
.vert { margin-left: 5px; }
.canvas {
  margin-top: 2px;
  width: 923px;
  height: 445px;
  box-sizing: border-box;
  border: 2px solid #f00;
  background: #151820;
  overflow: hidden;
}
.bg-num { fill: #3d424c; font: 11px "DejaVu Sans Mono", monospace; }
.num { fill: #d8e8f0; font: 8px "DejaVu Sans Mono", monospace; }
.big-num { fill: #fff; font-size: 9px; }
.green-num { fill: #2ce02c; font-size: 8px; }
.leader { fill: #bdbdbd; font: 14px "Noto Sans CJK SC", sans-serif; letter-spacing: 3px; }
.leader.green { fill: #22e022; }
.snap-bar { height: 25px; margin-top: 3px; display: flex; align-items: center; margin-left: 1px; white-space: nowrap; }
.snap { gap: 3px; height: 24px; flex: none; justify-content: flex-start; padding-left: 2px; }
.snap:first-child { width: 51px; }
.snap:nth-child(2) { width: 75px; }
.snap-group { margin-left: 3px; height: 25px; display: flex; align-items: center; background: #f8f8f8; padding-left: 4px; width: 104px; flex: none; box-sizing: border-box; }
.snap-group .ic { margin-right: 7px; gap: 5px; }
.dlg-status { height: 21px; margin-top: 6px; display: flex; flex: none; gap: 3px; }
.coord { width: 97px; box-sizing: border-box; border: 1px solid #ddd; background: #f8f8f8; padding-left: 4px; color: #334; font-family: "Noto Sans", sans-serif; font-size: 11.5px; line-height: 18px; white-space: nowrap; }
.hint { flex: 1; position: relative; border: 1px solid #ddd; background: linear-gradient(#fbfbfb, #f2f2f2); padding-left: 1px; line-height: 18px; }
.grip {
  position: absolute;
  right: 1px;
  bottom: 1px;
  width: 9px;
  height: 8px;
  background-image: radial-gradient(#aaa 40%, transparent 45%);
  background-size: 3px 3px;
}

/* 底部状态栏 */
.statusbar {
  height: 21px;
  flex: none;
  display: flex;
  align-items: stretch;
  background: #f0f0f0;
  padding-top: 1px;
  box-sizing: border-box;
}
.cell {
  box-sizing: border-box;
  border: 1px solid #ddd;
  border-bottom: none;
  background: linear-gradient(#f4f4f4, #fdfdfd);
  padding-left: 2px;
  margin-right: 3px;
  line-height: 17px;
  white-space: nowrap;
  font-size: 12px;
}
.c0 { width: 147px; }
.c1 { width: 77px; }
.c2 { width: 97px; }
.c3 { width: 47px; }
.c4 { width: 913px; }
.c5 { width: 70px; margin: 0; }

/* 任务栏 */
.taskbar { height: 40px; flex: none; display: flex; align-items: stretch; background: #000; color: #fff; }
.start { width: 48px; display: flex; align-items: center; justify-content: center; flex: none; }
.task-search {
  width: 344px;
  flex: none;
  background: #333;
  display: flex;
  align-items: center;
  padding: 0 15px 0 9px;
  box-sizing: border-box;
}
.task-hint { margin-left: 5px; color: #8fa0ac; font-size: 14px; }
.mic { margin-left: auto; }
.task-icons { display: flex; margin-left: 0; }
.task-ic { width: 50px; display: flex; align-items: center; justify-content: center; }
.task-ic.active { width: 48px; background: #3a4a50; border-bottom: 3px solid #76b9ed; box-sizing: border-box; padding-top: 3px; }
.tray { margin-left: auto; display: flex; align-items: center; gap: 8px; padding-right: 25px; }
.tray-text { color: #ccc; margin-right: 5px; }
.tray-cn { margin: 0 6px 0 2px; font-size: 13px; }
.sg-mini {
  width: 15px;
  height: 15px;
  background: #e8481c;
  border-radius: 3px;
  transform: rotate(-12deg);
  color: #fff;
  text-align: center;
  font: italic bold 13px/15px "Liberation Sans", sans-serif;
  margin-right: 10px;
}
.clock {
  width: 62px;
  display: flex;
  flex-direction: column;
  align-items: center;
  gap: 4px;
  font: 12.5px/16px "Noto Sans", "Liberation Sans", sans-serif;
  margin-right: 7px;
}
/* 悬浮球 */
.orb {
  position: absolute;
  left: 1009px;
  top: -27px;
  width: 44px;
  height: 44px;
  box-sizing: border-box;
  border-radius: 50%;
  border: 2px solid #e8ece8;
  outline: 1px solid #a8a8a8;
  background: linear-gradient(#36b048, #58cc60);
  box-shadow: 0 3px 5px rgba(0, 0, 0, 0.35);
  color: #fff;
  font: bold 11px/63px "Noto Sans", "Liberation Sans", sans-serif;
  text-align: center;
  z-index: 3;
}

/* 搜狗输入法条 */
.ime { position: absolute; left: 737px; top: 12px; display: flex; align-items: flex-start; z-index: 3; }
.ime-s {
  width: 26px;
  height: 26px;
  border-radius: 5px;
  background: #ec4f1c;
  transform: rotate(-12deg);
  color: #fff;
  text-align: center;
  font: italic bold 24px/26px "Liberation Sans", sans-serif;
  z-index: 1;
}
.ime-bar {
  margin: 2px 0 0 -5px;
  height: 23px;
  width: 185px;
  box-sizing: border-box;
  border: 1px solid #a8c0d8;
  background: #f4f6f8;
  display: flex;
  align-items: center;
  padding-left: 11px;
  gap: 8px;
  color: #1a78c8;
}
.ime-bar b { font-size: 14px; flex: none; }
.ime-bar .punc { width: 10px; margin-left: 1px; overflow: hidden; }
.ime-smile { margin-left: 2px; }
.ime-shirt { margin-left: -3px; }
.ime-tool { margin-left: -1px; }
</style>
